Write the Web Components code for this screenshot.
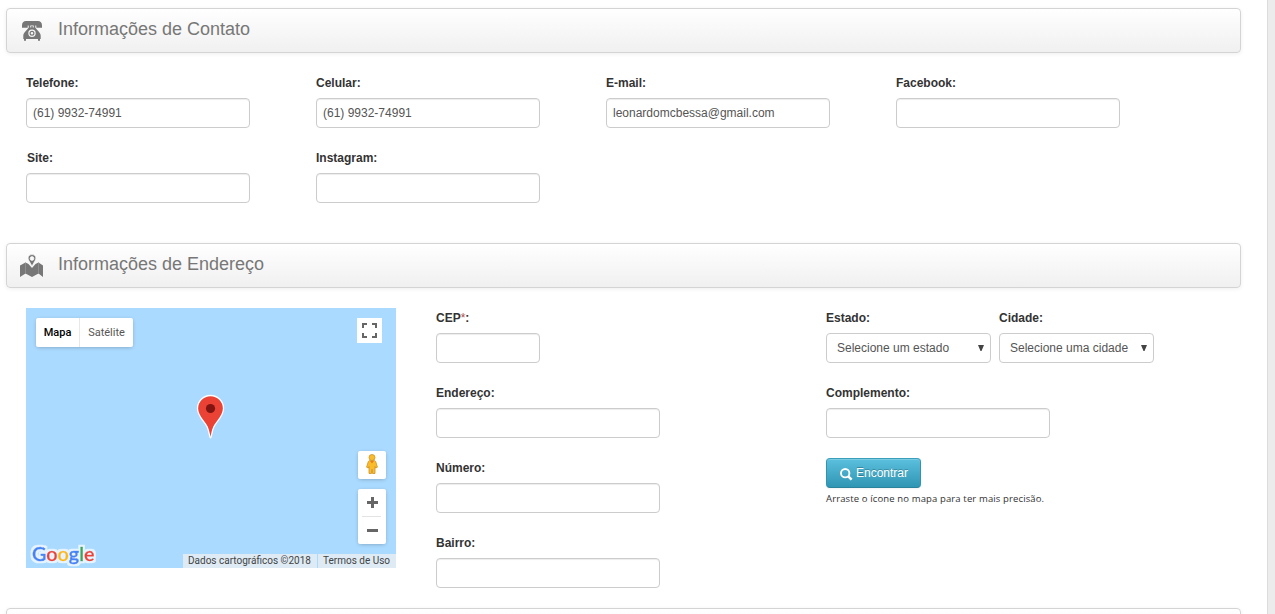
<!DOCTYPE html>
<html lang="pt-BR">
<head>
<meta charset="utf-8">
<title>Cadastro</title>
<style>
html,body{margin:0;height:100%;overflow:hidden;background:#fff}
body{font:12px/20px "Liberation Sans",Arial,sans-serif;color:#333}
</style>
</head>
<body>
<contact-page></contact-page>
<script>
const define = (name, html, setup) => customElements.define(name, class extends HTMLElement {
  constructor() {
    super();
    const t = document.createElement('template');
    t.innerHTML = '<style>*{box-sizing:border-box}</style>' + html;
    this.attachShadow({mode: 'open'}).append(t.content.cloneNode(true));
  }
  connectedCallback() { if (setup) setup(this, this.shadowRoot); }
});

define('section-header', `
<style>
:host{display:flex;box-sizing:border-box;height:45px;width:1235px;border:1px solid #d4d4d4;border-radius:4px;
 background:linear-gradient(#fff,#f0f0f0);box-shadow:0 1px 4px rgba(0,0,0,.065);padding-left:12px;align-items:center}
.icon{width:26px;height:26px;margin-top:1px;color:#777}
h3{margin:0 0 4px 13px;font-size:18px;line-height:30px;font-weight:400;color:#777}
</style>
<span class="icon"><slot name="icon"></slot></span><h3><slot></slot></h3>`);

define('text-field', `
<style>
:host{display:block;height:75px;width:var(--w,224px)}
label{display:block;font-weight:700;line-height:20px;margin-bottom:5px;padding-left:var(--indent,0)}
input{display:block;width:100%;height:30px;margin:0;border:1px solid #ccc;border-radius:4px;padding:4px 6px;
 font:12px/20px "Liberation Sans",Arial,sans-serif;color:#555;background:#fff;box-shadow:inset 0 1px 1px rgba(0,0,0,.075);outline:0}
</style>
<label><slot></slot></label><input type="text">`,
(el, r) => { const i = r.querySelector('input'); i.value = el.getAttribute('value') || ''; i.setAttribute('aria-label', el.textContent.trim()); });

define('select-field', `
<style>
:host{display:block;height:75px;width:var(--w,165px)}
label{display:block;font-weight:700;line-height:20px;margin-bottom:5px}
.box{display:flex;align-items:center;justify-content:space-between;height:30px;border:1px solid #ccc;border-radius:4px;padding:0 6px 0 10px;color:#555;white-space:nowrap}
svg{display:block;width:6px;height:6px;margin-top:-1px}
</style>
<label><slot></slot></label><div class="box"><span class="v"></span><svg viewBox="0 0 6 6"><path d="M0 0h6L3.500 6H2.500z" fill="#444"/></svg></div>`,
(el, r) => { r.querySelector('.v').textContent = el.getAttribute('value'); });

define('find-button', `
<style>
:host{display:block}
button{display:flex;align-items:center;gap:3px;width:95px;height:30px;padding:0 0 0 13px;border:1px solid #2f96b4;border-color:#3a9fbb #3094b1 #2a829c;border-radius:4px;
 background:linear-gradient(#5bc0de,#2f96b4);box-shadow:inset 0 1px 0 rgba(255,255,255,.2),0 1px 2px rgba(0,0,0,.05);
 color:#fff;font:12px/20px "Liberation Sans",Arial,sans-serif;text-shadow:0 -1px 0 rgba(0,0,0,.25)}
svg{width:13px;height:13px;margin-top:3px}
</style>
<button type="button"><svg viewBox="0 0 13 13" fill="none" stroke="#fff"><circle cx="5.2" cy="5.2" r="4.2" stroke-width="1.9"/><path d="M8.300 8.300l3.300 3.300" stroke-width="2.500"/></svg><slot></slot></button>`);

define('google-logo', `
<style>
:host{display:block;font:600 20px/26px "Product Sans","Lato",sans-serif;white-space:nowrap}
svg{display:block;overflow:visible}
text{stroke-linejoin:round}
.halo{stroke:#e2f1ff;stroke-width:5px}
.b{fill:#4285f4;stroke:#4285f4}.r{fill:#ea4335;stroke:#ea4335}.y{fill:#fbbc05;stroke:#fbbc05}.g{fill:#34a853;stroke:#34a853}
tspan{stroke-width:.4px}
</style>
<svg width="70" height="26"><defs><filter id="halo" x="-10%" y="-20%" width="120%" height="140%"><feMorphology in="SourceAlpha" operator="dilate" radius="1.5" result="d"/><feGaussianBlur in="d" stdDeviation=".5" result="s"/><feFlood flood-color="#fff" flood-opacity=".7"/><feComposite in2="s" operator="in"/><feMerge><feMergeNode/><feMergeNode in="SourceGraphic"/></feMerge></filter></defs><text x="0" y="19" textLength="62.500" lengthAdjust="spacingAndGlyphs" filter="url(#halo)"><tspan class="b">G</tspan><tspan class="r">o</tspan><tspan class="y">o</tspan><tspan class="b">g</tspan><tspan class="g">l</tspan><tspan class="r">e</tspan></text></svg>`);

define('map-view', `
<style>
:host{display:block;position:relative;width:370px;height:260px;background:#aadaff;font-family:Roboto,Arial,sans-serif;overflow:hidden}
.types{position:absolute;left:10px;top:10px;display:flex;height:29px;background:#fff;border-radius:2px;box-shadow:0 1px 4px -1px rgba(0,0,0,.3);font-size:11px;line-height:29px;color:#565656}
.types b{width:44px;text-align:center;font-weight:500;color:#000;border-right:1px solid #e8e8e8}
.types span{width:53px;text-align:center}
.full{position:absolute;left:331px;top:10px;width:25px;height:25px;background:#fff}
.pin{position:absolute;left:170px;top:86px}
.ctl{position:absolute;left:332px;width:28px;background:#fff;border-radius:2px;box-shadow:0 1px 4px -1px rgba(0,0,0,.3)}
.man{top:143px;height:28px}.zoom{top:181px;height:55px}
svg{display:block}
google-logo{position:absolute;left:6px;top:234px}
.legal{position:absolute;right:0;bottom:0;display:flex;height:14px;font-size:10px;line-height:14px;color:#444;white-space:nowrap}
.legal span{background:#deebf5;padding-left:5px}
.legal span:first-child{width:134px;margin-right:1px}.legal span:last-child{width:78px}
</style>
<div class="types"><b>Mapa</b><span>Satélite</span></div>
<div class="full"><svg width="25" height="25" fill="none" stroke="#666" stroke-width="2"><path d="M6 10V6h4M15 6h4v4M19 15v4h-4M10 19H6v-4"/></svg></div>
<svg class="pin" width="29" height="46" viewBox="0 0 29 46"><path d="M14.500 44C13.500 44 13.400 37.500 11.100 32.800C8 26.400 1.500 22.500 1.500 14.500A13 13 0 0 1 27.500 14.500C27.500 22.500 21 26.400 17.900 32.800C15.600 37.500 15.500 44 14.500 44z" fill="#ea4335" stroke="#fff" stroke-width="1.3"/><circle cx="14.500" cy="14.500" r="4.600" fill="#811411"/></svg>
<div class="ctl man"><svg width="28" height="28"><g fill="#fbbc2c" stroke="#cf9222" stroke-width=".8"><path d="M10.300 10.500Q11 9 14 9T17.700 10.500L19.400 16.200 17.700 17 17 15.500V22.500H14.500V18.500H13.500V22.500H11V15.500L10.300 17 8.600 16.200z"/><circle cx="14" cy="6.500" r="3"/></g><path d="M12 10h4l-2 2.500z" fill="#e77b22"/></svg></div>
<div class="ctl zoom"><svg width="28" height="55"><path d="M9 13.500h11M14.500 8v11M9 41.500h11" stroke="#666" stroke-width="3"/><path d="M4 27.500h19" stroke="#e3e3e3"/></svg></div>
<google-logo></google-logo>
<div class="legal"><span>Dados cartográficos ©2018</span><span>Termos de Uso</span></div>`);

define('contact-page', `
<style>
:host{display:flex;height:614px;overflow:hidden}
main{width:1267px;flex:none;padding:8px 0 0 6px}
aside{flex:1;background:#ececec;border-left:1px solid #dcdcdc}
.contact{display:grid;grid-template-columns:repeat(4,290px);margin:20px 0 20px 20px;height:150px}
.address{display:flex;margin:20px 0 0 20px;height:300px}
.col{width:350px;margin-left:40px}
.row{display:flex;gap:8px}
.star{color:#b94a48;font-weight:400}
small{display:block;font:9.500px/22px "Open Sans",sans-serif;letter-spacing:.13px;color:#333;white-space:nowrap}
svg{display:block}
</style>
<main>
<section-header><svg slot="icon" width="26" height="26"><g fill="#777"><path d="M3 9.800V7.500C3 4.500 4.500 3 7 3H19C21.500 3 23 4.500 23 7.500V9.800H17.300V7.500H8.700V9.800z"/><path fill-rule="evenodd" d="M9.700 7H11.300V9.500H12.300V8H13.700V9.500H14.700V7H16.300V9.500C18 12.500 21.700 14.500 21.700 17.500V21H21V22.800H19V21H7V22.800H5V21H4.300V17.500C4.300 14.500 8 12.500 9.700 9.500zM13 11.500A3.700 3.700 0 1 0 13 18.900A3.700 3.700 0 1 0 13 11.500z"/><circle cx="13" cy="15.200" r="1.900" fill="none" stroke="#777" stroke-width="1.200"/></g></svg>Informações de Contato</section-header>
<div class="contact">
<text-field value="(61) 9932-74991">Telefone:</text-field><text-field value="(61) 9932-74991">Celular:</text-field><text-field value="leonardomcbessa@gmail.com">E-mail:</text-field><text-field>Facebook:</text-field>
<text-field style="--indent:1px">Site:</text-field><text-field>Instagram:</text-field>
</div>
<section-header><svg slot="icon" width="26" height="26"><g fill="#777"><path d="M1 12.500L6.500 9.500 9.500 11 13 15 16.500 11 19.500 9.500 24 12.500V24L19.500 20.500 13 24 6.500 20.500 1 24z"/><path d="M6.500 9.500v11M19.500 9.500v11" stroke="#999" stroke-width=".7"/><path fill-rule="evenodd" d="M13 13.200L9.900 7.600C8 4.300 10 1.600 13 1.600S18 4.300 16.100 7.600zM13 3.600A1.900 1.900 0 1 0 13 7.400A1.900 1.900 0 1 0 13 3.600z" stroke="#fafafa" stroke-width=".7"/></g></svg>Informações de Endereço</section-header>
<div class="address">
<map-view></map-view>
<div class="col"><text-field style="--w:104px">CEP<span class="star">*</span>:</text-field><text-field>Endereço:</text-field><text-field>Número:</text-field><text-field>Bairro:</text-field></div>
<div class="col"><div class="row"><select-field value="Selecione um estado">Estado:</select-field><select-field style="--w:155px" value="Selecione uma cidade">Cidade:</select-field></div><text-field>Complemento:</text-field><find-button>Encontrar</find-button><small>Arraste o ícone no mapa para ter mais precisão.</small></div>
</div>
<section-header></section-header>
</main><aside></aside>`);
</script>
</body>
</html>
